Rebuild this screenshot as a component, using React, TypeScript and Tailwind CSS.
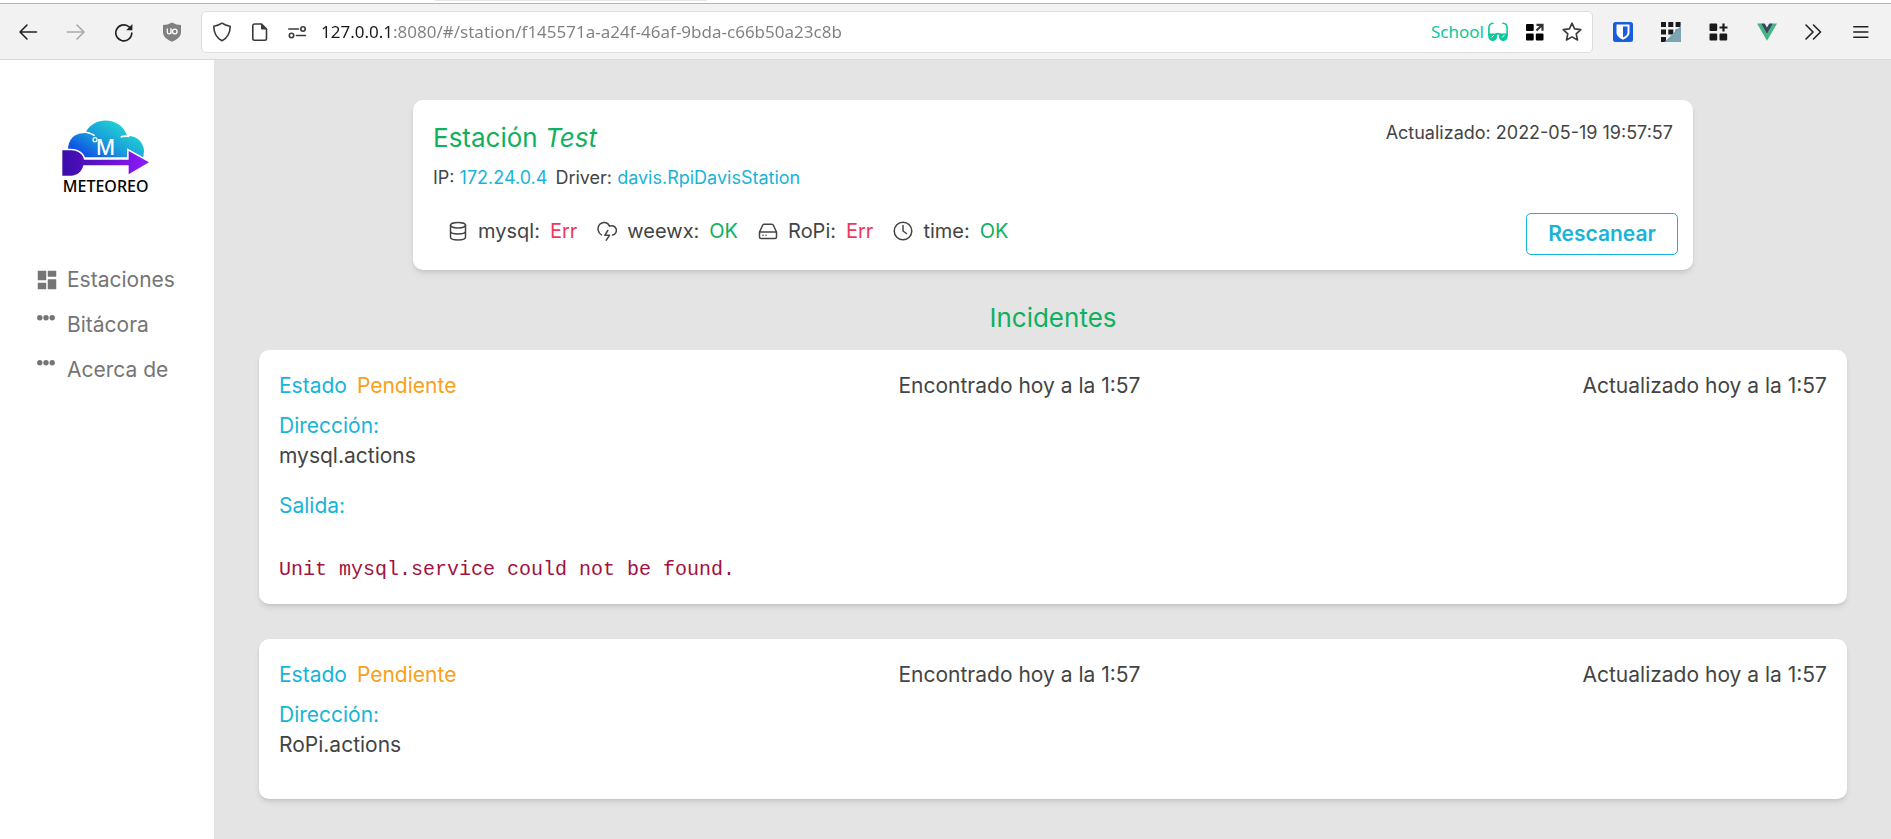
import type { ReactNode } from "react";

const stroke = { fill: "none", stroke: "currentColor", strokeWidth: 1.6, strokeLinecap: "round", strokeLinejoin: "round" } as const;

function ToolButton({ label, children, className = "" }: { label: string; children: ReactNode; className?: string }) {
  return (
    <button type="button" aria-label={label} className={`flex size-5 shrink-0 items-center justify-center ${className}`}>
      <svg viewBox="0 0 20 20" className="size-5" aria-hidden="true">
        {children}
      </svg>
    </button>
  );
}

function BrowserBar() {
  return (
    <header className="font-['Noto_Sans',sans-serif] text-[#222]">
      <div className="flex h-[3px] bg-white">
        <div className="ml-[23%] h-px w-[272px] bg-gray-200" />
      </div>
      <div className="flex h-[57px] items-center border-t border-b border-t-[#b4b4b4] border-b-[#d9d9d9] bg-[#f2f2f2] pr-[18px] pl-[18px]">
        <div className="flex gap-7">
          <ToolButton label="Back">
            <path d="M18.500 10H2M9 3L2 10L9 17" {...stroke} />
          </ToolButton>
          <ToolButton label="Forward" className="text-[#aaa]">
            <path d="M1.500 10H18M11 3L18 10L11 17" {...stroke} />
          </ToolButton>
          <ToolButton label="Reload">
            <path d="M17.800 11A8 8 0 1 1 14.500 4.400L17 6.500" {...stroke} />
            <path d="M18.400 2v6.200h-6.200z" fill="currentColor" />
          </ToolButton>
          <ToolButton label="uBlock" className="text-[#808080]">
            <path d="M10 .5C7 2.200 4 3 1 3v7.500c0 4.500 5 7.500 9 9.200 4-1.700 9-4.700 9-9.200V3C16 3 13 2.200 10 .5z" fill="currentColor" />
            <path d="M5.300 6.500v3.700c0 2.300 3.600 2.300 3.600 0V6.500M9 6.200v5.500" fill="none" stroke="#fff" strokeWidth="1.300" />
            <circle cx="12.800" cy="9.500" r="2.300" fill="none" stroke="#fff" strokeWidth="1.300" />
          </ToolButton>
        </div>
        <div className="ml-[19px] flex h-[42px] min-w-0 flex-1 items-center rounded-[5px] border border-[#dcdcdc] bg-white pr-2.5 pl-2.5">
          <div className="flex shrink-0 gap-[18px] text-[#3a3a3a]">
            <ToolButton label="Tracking protection">
              <path d="M10 1.200C7.500 3 5 3.800 1.800 4.200c0 6 1.700 11 8.200 14.600 6.500-3.600 8.200-8.600 8.200-14.600-3.200-.4-5.700-1.200-8.200-3z" {...stroke} />
            </ToolButton>
            <ToolButton label="Page information">
              <path d="M4.500 2h7l5 5v9.500a1.700 1.700 0 0 1-1.700 1.700H4.500a1.700 1.700 0 0 1-1.700-1.700V3.700A1.700 1.700 0 0 1 4.500 2z" {...stroke} />
              <path d="M11 1.500L17 7.500H12a1 1 0 0 1-1-1z" fill="currentColor" />
            </ToolButton>
            <ToolButton label="Permissions">
              <path d="M.8 7h9.700M8.500 13.500h9" {...stroke} />
              <circle cx="15" cy="7" r="2.200" {...stroke} />
              <circle cx="3.500" cy="13.500" r="2.200" {...stroke} />
            </ToolButton>
          </div>
          <input
            type="text"
            aria-label="Address"
            defaultValue="127.0.0.1:8080/#/station/f145571a-a24f-46af-9bda-c66b50a23c8b"
            className="ml-[13px] h-7 min-w-0 flex-1 bg-[linear-gradient(to_right,#1b1b1b_73px,#808080_73px)] bg-clip-text text-[17px] text-transparent outline-none"
          />
          <span className="ml-4 text-[17px] text-[#0bc79c]">School</span>
          <div className="ml-1 flex shrink-0 gap-[17px]">
            <ToolButton label="Container" className="text-[#0bc79c]">
              <path d="M5 1.300C2 1.500 1 3 .9 6v7M15 1.300c3 .2 4 1.700 4.100 4.700v7" {...stroke} />
              <path d="M8 12.500q2-1.800 4 0" {...stroke} />
              <path d="M.3 11.500h8.800v3.300a4.200 4 0 0 1-8.800 0zM10.900 11.500h8.800v3.300a4.200 4 0 0 1-8.800 0z" fill="currentColor" />
              <path d="M3.500 15.500l2.500-2.500M14 15.500l2.500-2.500" stroke="#fff" strokeWidth="1" />
            </ToolButton>
            <ToolButton label="Extensions page" className="text-black">
              <path d="M2 2H7.700a1 1 0 0 1 1 1v5a1 1 0 0 1-1 1H2a1 1 0 0 1-1-1V3a1 1 0 0 1 1-1zM2 11.500H7.700a1 1 0 0 1 1 1v5a1 1 0 0 1-1 1H2a1 1 0 0 1-1-1v-5a1 1 0 0 1 1-1zM11.800 11.500h5.700a1 1 0 0 1 1 1v5a1 1 0 0 1-1 1h-5.700a1 1 0 0 1-1-1v-5a1 1 0 0 1 1-1z" fill="currentColor" />
              <path d="M11.500 8.500L17 3M11.500 2.800h6v6" fill="none" stroke="#333" strokeWidth="2.200" />
            </ToolButton>
            <ToolButton label="Bookmark" className="text-[#3a3a3a]">
              <path d="M10 1.200l2.600 5.700 6.200.7-4.600 4.200 1.300 6.200-5.500-3.100L4.500 18l1.300-6.200L1.200 7.600l6.200-.7z" {...stroke} />
            </ToolButton>
          </div>
        </div>
        <div className="ml-5 flex gap-7">
          <ToolButton label="Bitwarden">
            <rect width="20" height="20" rx="2.500" fill="#175ddc" />
            <path d="M3.500 2.500h13v8c0 3.500-3 5.500-6.500 7.300-3.500-1.800-6.500-3.800-6.500-7.300z" fill="#fff" />
            <path d="M10 4.500h4.500v6c0 2.300-2.200 3.800-4.500 5.100z" fill="#175ddc" />
          </ToolButton>
          <ToolButton label="Grid extension">
            <path d="M0 0h5v5H0zM7.300 0h5v5h-5zM14.600 0h5v5h-5zM0 7.500h5v5H0zM7.300 7.500h5v5h-5zM14.600 7.500h5v5h-5zM0 15h5v5H0z" fill="#1a1a1a" />
            <path d="M20 3.500V20H3.500z" fill="#7ba5b1" />
          </ToolButton>
          <ToolButton label="Add tab group" className="text-[#1a1a1a]">
            <path d="M1.500 1.500H7.200a1 1 0 0 1 1 1V8a1 1 0 0 1-1 1H1.500a1 1 0 0 1-1-1V2.500a1 1 0 0 1 1-1zM1.500 11.500H7.200a1 1 0 0 1 1 1v5a1 1 0 0 1-1 1H1.500a1 1 0 0 1-1-1v-5a1 1 0 0 1 1-1zM11.500 11.500h5.700a1 1 0 0 1 1 1v5a1 1 0 0 1-1 1h-5.700a1 1 0 0 1-1-1v-5a1 1 0 0 1 1-1z" fill="currentColor" />
            <path d="M10.500 5.500h8M14.500 1.500v8" stroke="currentColor" strokeWidth="2.200" />
          </ToolButton>
          <ToolButton label="Vue devtools">
            <path d="M0 1.500h4L10 12 16 1.500h4L10 18.800z" fill="#41b883" />
            <path d="M4 1.500h3.700L10 5.500l2.300-4H16L10 12z" fill="#35495e" />
          </ToolButton>
          <ToolButton label="More tools">
            <path d="M1 3l7 7-7 7M8.500 3l7 7-7 7" {...stroke} />
          </ToolButton>
          <ToolButton label="Menu">
            <path d="M.8 4.800h14M.8 10h14M.8 15.200h14" {...stroke} />
          </ToolButton>
        </div>
      </div>
    </header>
  );
}

function Logo() {
  return (
    <svg viewBox="186 88 264 240" className="h-20 w-[88px]" role="img" aria-label="Meteoreo">
      <defs>
        <linearGradient id="cloud" x1="0" y1="1" x2="1" y2="0.200">
          <stop offset="0" stopColor="#0a2fe8" />
          <stop offset="0.500" stopColor="#1a9bdc" />
          <stop offset="1" stopColor="#22e6cf" />
        </linearGradient>
        <linearGradient id="arrow" x1="0" y1="0" x2="1" y2="0">
          <stop offset="0" stopColor="#3a0ca8" />
          <stop offset="1" stopColor="#8f1bfa" />
        </linearGradient>
      </defs>
      <path d="M204 182C204 150 222 131 250 131L258 126C284 78 362 80 382 139C414 138 432 162 432 184L430 203H204Z" fill="url(#cloud)" />
      <path d="M248 127Q268 127 284 138M362 142Q372 138 388 140" fill="none" stroke="#fff" strokeWidth="5" />
      <circle cx="285" cy="150" r="6" fill="none" stroke="#fff" strokeWidth="3.500" />
      <text x="317" y="197" textAnchor="middle" fontSize="64" fontWeight="500" fontFamily="Noto Sans, sans-serif" fill="#fff">M</text>
      <path
        d="M187 182H213C234 182 249 194 252 210H386V184L447 218L386 254V227H250C246 246 232 258 213 258H187Z"
        fill="none"
        stroke="#fff"
        strokeWidth="10"
      />
      <path d="M187 182H213C234 182 249 194 252 210H386V184L447 218L386 254V227H250C246 246 232 258 213 258H187Z" fill="url(#arrow)" />
      <text x="317" y="308" textAnchor="middle" fontSize="48" fontWeight="500" fontFamily="Noto Sans, sans-serif" fill="#000">METEOREO</text>
    </svg>
  );
}

function DashboardIcon() {
  return (
    <svg viewBox="0 0 20 20" className="size-5" aria-hidden="true">
      <path d="M1 1h8v9H1zM11 1h8v5.500h-8zM1 13h8v6H1zM11 9.500h8V19h-8z" fill="currentColor" stroke="currentColor" strokeWidth="0.500" strokeLinejoin="round" />
    </svg>
  );
}

function DotsIcon() {
  return (
    <svg viewBox="0 0 20 20" className="size-5" aria-hidden="true">
      <circle cx="2.800" cy="2.700" r="2.700" fill="currentColor" />
      <circle cx="9" cy="2.700" r="2.700" fill="currentColor" />
      <circle cx="15.200" cy="2.700" r="2.700" fill="currentColor" />
    </svg>
  );
}

const links = [
  { text: "Estaciones", href: "#/stations", icon: <DashboardIcon /> },
  { text: "Bitácora", href: "#/log", icon: <DotsIcon /> },
  { text: "Acerca de", href: "#/about", icon: <DotsIcon /> },
];

function Sidebar() {
  return (
    <aside className="w-[214px] shrink-0 bg-white">
      <div className="flex justify-center pt-[59px] pr-0.5">
        <Logo />
      </div>
      <nav className="mt-[66px] pl-[37px]">
        <ul className="flex flex-col gap-[15px]">
          {links.map((link) => (
            <li key={link.text}>
              <a href={link.href} className="flex items-center gap-2.5 text-[21px] leading-[30px] text-[#757575]">
                {link.icon}
                {link.text}
              </a>
            </li>
          ))}
        </ul>
      </nav>
    </aside>
  );
}

const statusStroke = { fill: "none", stroke: "currentColor", strokeWidth: 1.5, strokeLinecap: "round", strokeLinejoin: "round" } as const;

const services = [
  {
    name: "mysql",
    ok: false,
    icon: (
      <svg viewBox="0 0 20 20" className="size-5" aria-hidden="true">
        <ellipse cx="10" cy="4.200" rx="7.500" ry="2.700" {...statusStroke} />
        <path d="M2.500 4.200v12c0 1.500 3 2.700 7.500 2.700s7.500-1.200 7.500-2.700v-12M2.500 10.300c0 1.500 3 2.700 7.500 2.700s7.500-1.200 7.500-2.700" {...statusStroke} />
      </svg>
    ),
  },
  {
    name: "weewx",
    ok: true,
    icon: (
      <svg viewBox="0 0 20 20" className="size-5" aria-hidden="true">
        <path d="M4.500 13.800A6 6.500 0 1 1 12.500 5.200A4.700 4.700 0 1 1 15.500 14" {...statusStroke} />
        <path d="M10.800 9.500L7.800 14.300H12.500L9.300 19.200" {...statusStroke} />
      </svg>
    ),
  },
  {
    name: "RoPi",
    ok: false,
    icon: (
      <svg viewBox="0 0 20 20" className="size-5" aria-hidden="true">
        <path d="M1.500 11l3-6.500A2 2 0 0 1 6.300 3.300h7.400a2 2 0 0 1 1.800 1.200l3 6.500v5a1.500 1.500 0 0 1-1.500 1.500H3A1.500 1.500 0 0 1 1.500 16zM1.500 11h17M5 14.200h.1M8 14.200h.1" {...statusStroke} />
      </svg>
    ),
  },
  {
    name: "time",
    ok: true,
    icon: (
      <svg viewBox="0 0 20 20" className="size-5" aria-hidden="true">
        <circle cx="10" cy="10" r="8.800" {...statusStroke} />
        <path d="M10 4.500V10l3.500 2.500" {...statusStroke} />
      </svg>
    ),
  },
];

function StationCard() {
  return (
    <section className="mx-auto flex w-full max-w-[1280px] justify-between rounded-[10px] bg-white pt-5 pb-[15px] pl-5 shadow-md">
      <div className="pb-[9px]">
        <h1 className="text-[26px] leading-9 text-[#10b060]">
          Estación <em>Test</em>
        </h1>
        <p className="mt-2 text-[18px] leading-[27px]">
          IP: <span className="text-[#18b4d8]">172.24.0.4</span>
          <span className="ml-2">
            Driver: <span className="text-[#18b4d8]">davis.RpiDavisStation</span>
          </span>
        </p>
        <ul className="mt-[25px] ml-[15px] flex gap-5 leading-[30px]">
          {services.map((service) => (
            <li key={service.name} className="flex items-center gap-2.5">
              {service.icon}
              <span>{service.name}:</span>
              <span className={service.ok ? "text-[#10b060]" : "text-[#f0385c]"}>{service.ok ? "OK" : "Err"}</span>
            </li>
          ))}
        </ul>
      </div>
      <div className="flex flex-col items-end justify-between pr-[15px]">
        <p className="pr-[5px] text-[18px] leading-[26px]">Actualizado: 2022-05-19 19:57:57</p>
        <button type="button" className="h-[42px] w-[152px] rounded-[5px] border border-[#18b4d8] text-[21px] font-semibold text-[#18b4d8]">
          Rescanear
        </button>
      </div>
    </section>
  );
}

function IncidentCard({ address, output }: { address: string; output?: string }) {
  return (
    <article className="rounded-[10px] bg-white px-5 pt-[21px] pb-[19px] text-[21px] leading-[30px] shadow-md">
      <div className="flex justify-between">
        <p className="flex gap-2.5">
          <span className="text-[#18b4d8]">Estado</span>
          <span className="text-[#f9a01b]">Pendiente</span>
        </p>
        <p>Encontrado hoy a la 1:57</p>
        <p>Actualizado hoy a la 1:57</p>
      </div>
      <h3 className="mt-2.5 text-[#18b4d8]">Dirección:</h3>
      <p className="mb-5">{address}</p>
      {output && (
        <>
          <h3 className="text-[#18b4d8]">Salida:</h3>
          <pre className="pt-[34px] font-['Liberation_Mono',monospace] text-[20px] leading-[30px] text-[#a3123f]">{output}</pre>
        </>
      )}
    </article>
  );
}

export default function App() {
  return (
    <div className="flex min-h-screen flex-col bg-[#e4e4e4] font-['Inter',sans-serif] text-[20px] text-[#444]">
      <BrowserBar />
      <div className="flex flex-1">
        <Sidebar />
        <main className="min-w-0 flex-1 pt-10 pr-11 pb-10 pl-[45px]">
          <StationCard />
          <h2 className="pt-[30px] pb-3.5 text-center text-[26px] leading-9 text-[#10b060]">Incidentes</h2>
          <div className="flex flex-col gap-[35px]">
            <IncidentCard address="mysql.actions" output="Unit mysql.service could not be found." />
            <IncidentCard address="RoPi.actions" />
          </div>
        </main>
      </div>
    </div>
  );
}
